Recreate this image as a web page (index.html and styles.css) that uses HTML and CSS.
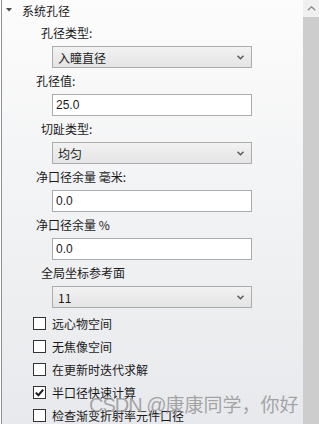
FILE: index.html
```html
<!DOCTYPE html>
<html lang="zh-CN">
<head>
  <meta charset="UTF-8" />
  <title>系统孔径</title>
  <link rel="stylesheet" href="styles.css">
</head>
<body>
  <div class="window">
    <div class="panel">
      <div class="section-head">
        <svg class="caret" width="6" height="4" viewBox="0 0 6 4"><path d="M0 0h6L3 3.5z" fill="#4a4a4a"/></svg>
        <span>系统孔径</span>
      </div>

      <div class="label">孔径类型:</div>
      <div class="select"><span>入瞳直径</span><svg class="chev" width="7" height="5" viewBox="0 0 7 5"><path d="M0.5 0.8l3 3 3-3" fill="none" stroke="#555" stroke-width="1.4"/></svg></div>

      <div class="label near">孔径值:</div>
      <input class="field" type="text" value="25.0">

      <div class="label">切趾类型:</div>
      <div class="select"><span>均匀</span><svg class="chev" width="7" height="5" viewBox="0 0 7 5"><path d="M0.5 0.8l3 3 3-3" fill="none" stroke="#555" stroke-width="1.4"/></svg></div>

      <div class="label near">净口径余量 毫米:</div>
      <input class="field" type="text" value="0.0">

      <div class="label near">净口径余量 %</div>
      <input class="field" type="text" value="0.0">

      <div class="label">全局坐标参考面</div>
      <div class="select"><span>11</span><svg class="chev" width="7" height="5" viewBox="0 0 7 5"><path d="M0.5 0.8l3 3 3-3" fill="none" stroke="#555" stroke-width="1.4"/></svg></div>

      <ul class="checks">
        <li><span class="box"></span>远心物空间</li>
        <li><span class="box"></span>无焦像空间</li>
        <li><span class="box"></span>在更新时迭代求解</li>
        <li><span class="box"><svg width="11" height="11" viewBox="0 0 11 11"><path d="M1.8 5.6l2.6 2.6L9.2 2.6" fill="none" stroke="#1a1a1a" stroke-width="2"/></svg></span>半口径快速计算</li>
        <li><span class="box"></span>检查渐变折射率元件口径</li>
      </ul>
    </div>

    <div class="scrollbar">
      <div class="scroll-btn"><svg width="9" height="5" viewBox="0 0 9 5"><path d="M0.8 4.3l3.7-3.5 3.7 3.5" fill="none" stroke="#8a8a8a" stroke-width="1.3"/></svg></div>
      <div class="scroll-thumb"></div>
    </div>

    <div class="watermark"><span class="wm-latin">CSDN @</span>康康同学，你好</div>
  </div>
</body>
</html>
```

FILE: styles.css
```css
html, body {
  margin: 0;
  height: 100%;
  overflow: hidden;
  font-family: "Noto Sans CJK SC", "Liberation Sans", sans-serif;
  font-size: 12px;
  color: #1a1a1a;
}
.window {
  position: relative;
  display: flex;
  height: 424px;
}
.panel {
  flex: 1;
  margin-left: 1px;
  border-left: 1px solid #8e9094;
  background: linear-gradient(to bottom, #fcfcfc, #e7e9ec);
  overflow: hidden;
}
.section-head {
  display: flex;
  align-items: center;
  height: 20px;
  padding-left: 4px;
}
.section-head .caret {
  margin-right: 10px;
}
.label {
  height: 16px;
  line-height: 16px;
  padding: 5px 0 5px 39px;
  white-space: nowrap;
}
.label.near {
  padding-left: 34px;
}
.select, .field {
  box-sizing: border-box;
  width: 200px;
  height: 22px;
  margin-left: 50px;
  border: 1px solid #acacac;
}
.select {
  display: flex;
  align-items: center;
  justify-content: space-between;
  padding: 0 7px 0 5px;
  background: linear-gradient(to bottom, #f2f2f2, #e4e4e4);
}
.select .chev {
  margin-top: 1px;
}
.field {
  display: block;
  padding: 0 3px;
  background: #fff;
  font-family: "Liberation Sans", "Noto Sans CJK SC", sans-serif;
  font-size: 12px;
  color: #1a1a1a;
  outline: none;
}
.checks {
  list-style: none;
  margin: 4px 0 0;
  padding: 0 0 0 31px;
}
.checks li {
  display: flex;
  align-items: center;
  height: 23px;
  white-space: nowrap;
}
.box {
  display: flex;
  align-items: center;
  justify-content: center;
  box-sizing: border-box;
  width: 13px;
  height: 13px;
  margin-right: 6px;
  border: 1px solid #333;
  background: #fff;
}
.watermark {
  position: absolute;
  left: 89px;
  top: 392px;
  font-family: "Noto Sans CJK SC", sans-serif;
  font-size: 19px;
  line-height: 24px;
  color: rgba(140, 140, 140, 0.75);
  white-space: nowrap;
  pointer-events: none;
}
.wm-latin {
  font-family: "Liberation Sans", sans-serif;
  font-size: 20px;
  letter-spacing: -1px;
}
.scrollbar {
  display: flex;
  flex-direction: column;
  width: 16px;
}
.scroll-btn {
  display: flex;
  align-items: center;
  justify-content: center;
  height: 17px;
  background: #f0f0f0;
}
.scroll-thumb {
  flex: 1;
  background: #cdcdcd;
}
```
